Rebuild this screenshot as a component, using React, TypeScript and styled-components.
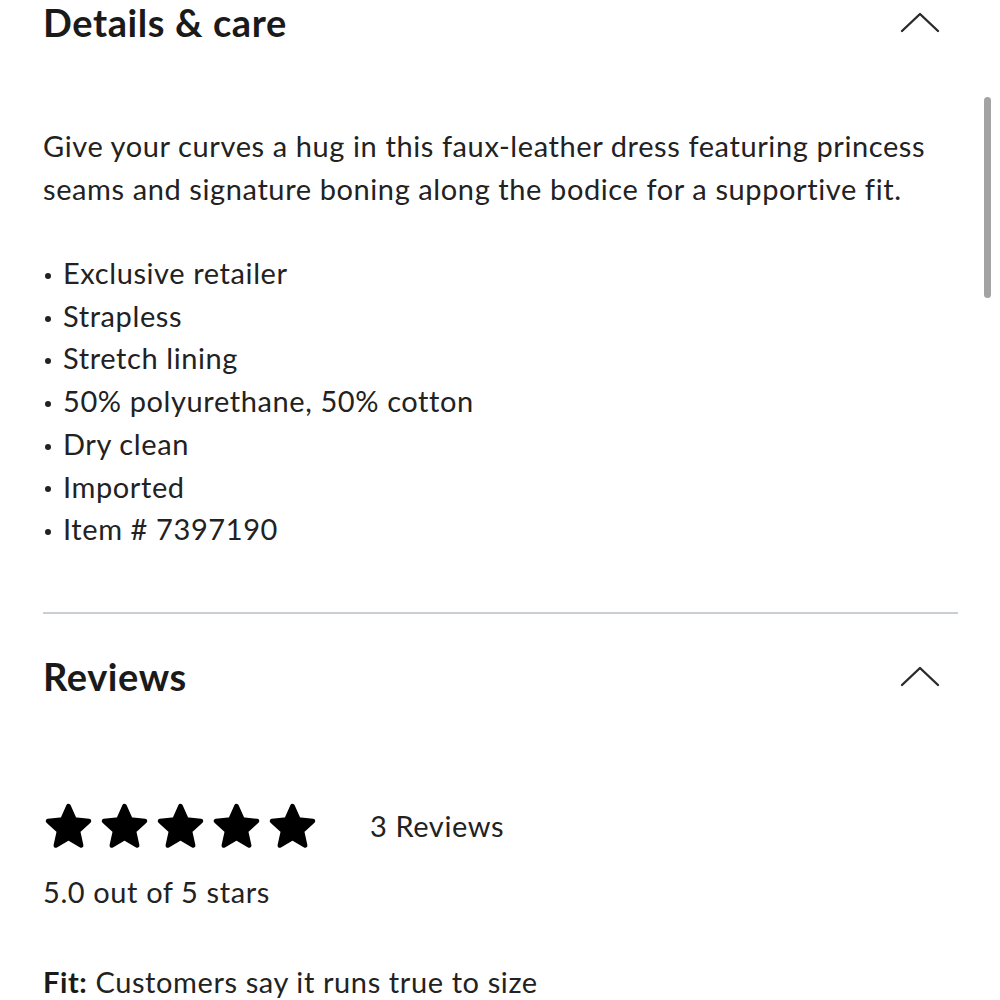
import React from 'react';
import styled, { createGlobalStyle } from 'styled-components';

const GlobalStyle = createGlobalStyle`
  html, body {
    margin: 0;
    padding: 0;
    background: #ffffff;
  }
  body {
    font-family: Lato, "Open Sans", sans-serif;
    color: #1c1c1c;
  }
`;

const Page = styled.div`
  position: relative;
  width: 1000px;
  height: 1000px;
  overflow: hidden;
  background: #fff;
`;

const Content = styled.div`
  padding: 0 42px 0 43px;
  margin-top: -7px;
`;

const SectionHeader = styled.div<{ h: number }>`
  display: flex;
  align-items: center;
  justify-content: space-between;
  height: ${(p) => p.h}px;
`;

const Title = styled.h2`
  margin: 0;
  font-size: 38px;
  font-weight: 700;
  color: #1a1a1a;
  letter-spacing: 0.6px;
`;

const Chevron = styled.svg`
  width: 40px;
  height: 22px;
  margin-right: 18px;
`;

const bodyText = `
  font-size: 29px;
  letter-spacing: 0.6px;
  color: #222;
`;

const Description = styled.p`
  margin: 74px 0 0;
  line-height: 42.5px;
  ${bodyText}
`;

const Bullets = styled.ul`
  list-style: none;
  margin: 42px 0 0;
  padding: 0;
`;

const Bullet = styled.li`
  display: flex;
  align-items: center;
  line-height: 42.7px;
  ${bodyText}
  &::before {
    content: '';
    width: 6px;
    height: 6px;
    border-radius: 50%;
    background: #222;
    margin: 5px 12px 0 2px;
    flex: none;
  }
`;

const Divider = styled.hr`
  border: none;
  height: 2px;
  background: #c9ced2;
  margin: 61px 0 0;
`;

const ReviewsHeader = styled(SectionHeader)`
  margin-top: 18px;
`;

const RatingRow = styled.div`
  display: flex;
  align-items: center;
  margin-top: 82px;
`;

const Stars = styled.div`
  display: flex;
  gap: 5px;
`;

const ReviewCount = styled.span`
  margin-left: 52px;
  ${bodyText}
`;

const RatingText = styled.div`
  margin-top: 24px;
  ${bodyText}
`;

const FitText = styled.div`
  margin-top: 55px;
  ${bodyText}
  b {
    font-weight: 700;
    color: #1a1a1a;
  }
`;

const Scrollbar = styled.div`
  position: absolute;
  right: 9px;
  top: 97px;
  width: 7px;
  height: 201px;
  border-radius: 4px;
  background: #a3a3a3;
`;

const ChevronUp = () => (
  <Chevron viewBox="0 0 40 22">
    <polyline points="2,20 20,3 38,20" fill="none" stroke="#2a2a2a" strokeWidth="2.4" strokeLinecap="round" strokeLinejoin="round" />
  </Chevron>
);

const Star = () => (
  <svg width="51" height="48" viewBox="0 0 50 48">
    <path
      d="M25 4 L31 17.5 L45.5 19 L34.5 29 L37.7 43.5 L25 36 L12.3 43.5 L15.5 29 L4.5 19 L19 17.5 Z"
      fill="#000"
      stroke="#000"
      strokeWidth="4.5"
      strokeLinejoin="round"
    />
  </svg>
);

const bullets = [
  'Exclusive retailer',
  'Strapless',
  'Stretch lining',
  '50% polyurethane, 50% cotton',
  'Dry clean',
  'Imported',
  'Item # 7397190',
];

export default function App() {
  return (
    <Page>
      <GlobalStyle />
      <Content>
        <SectionHeader h={58}>
          <Title>Details &amp; care</Title>
          <ChevronUp />
        </SectionHeader>
        <Description>
          Give your curves a hug in this faux-leather dress featuring princess
          <br />
          seams and signature boning along the bodice for a supportive fit.
        </Description>
        <Bullets>
          {bullets.map((b) => (
            <Bullet key={b}>{b}</Bullet>
          ))}
        </Bullets>
        <Divider />
        <ReviewsHeader h={88}>
          <Title>Reviews</Title>
          <ChevronUp />
        </ReviewsHeader>
        <RatingRow>
          <Stars>
            {[0, 1, 2, 3, 4].map((i) => (
              <Star key={i} />
            ))}
          </Stars>
          <ReviewCount>3 Reviews</ReviewCount>
        </RatingRow>
        <RatingText>5.0 out of 5 stars</RatingText>
        <FitText>
          <b>Fit:</b> Customers say it runs true to size
        </FitText>
      </Content>
      <Scrollbar />
    </Page>
  );
}
